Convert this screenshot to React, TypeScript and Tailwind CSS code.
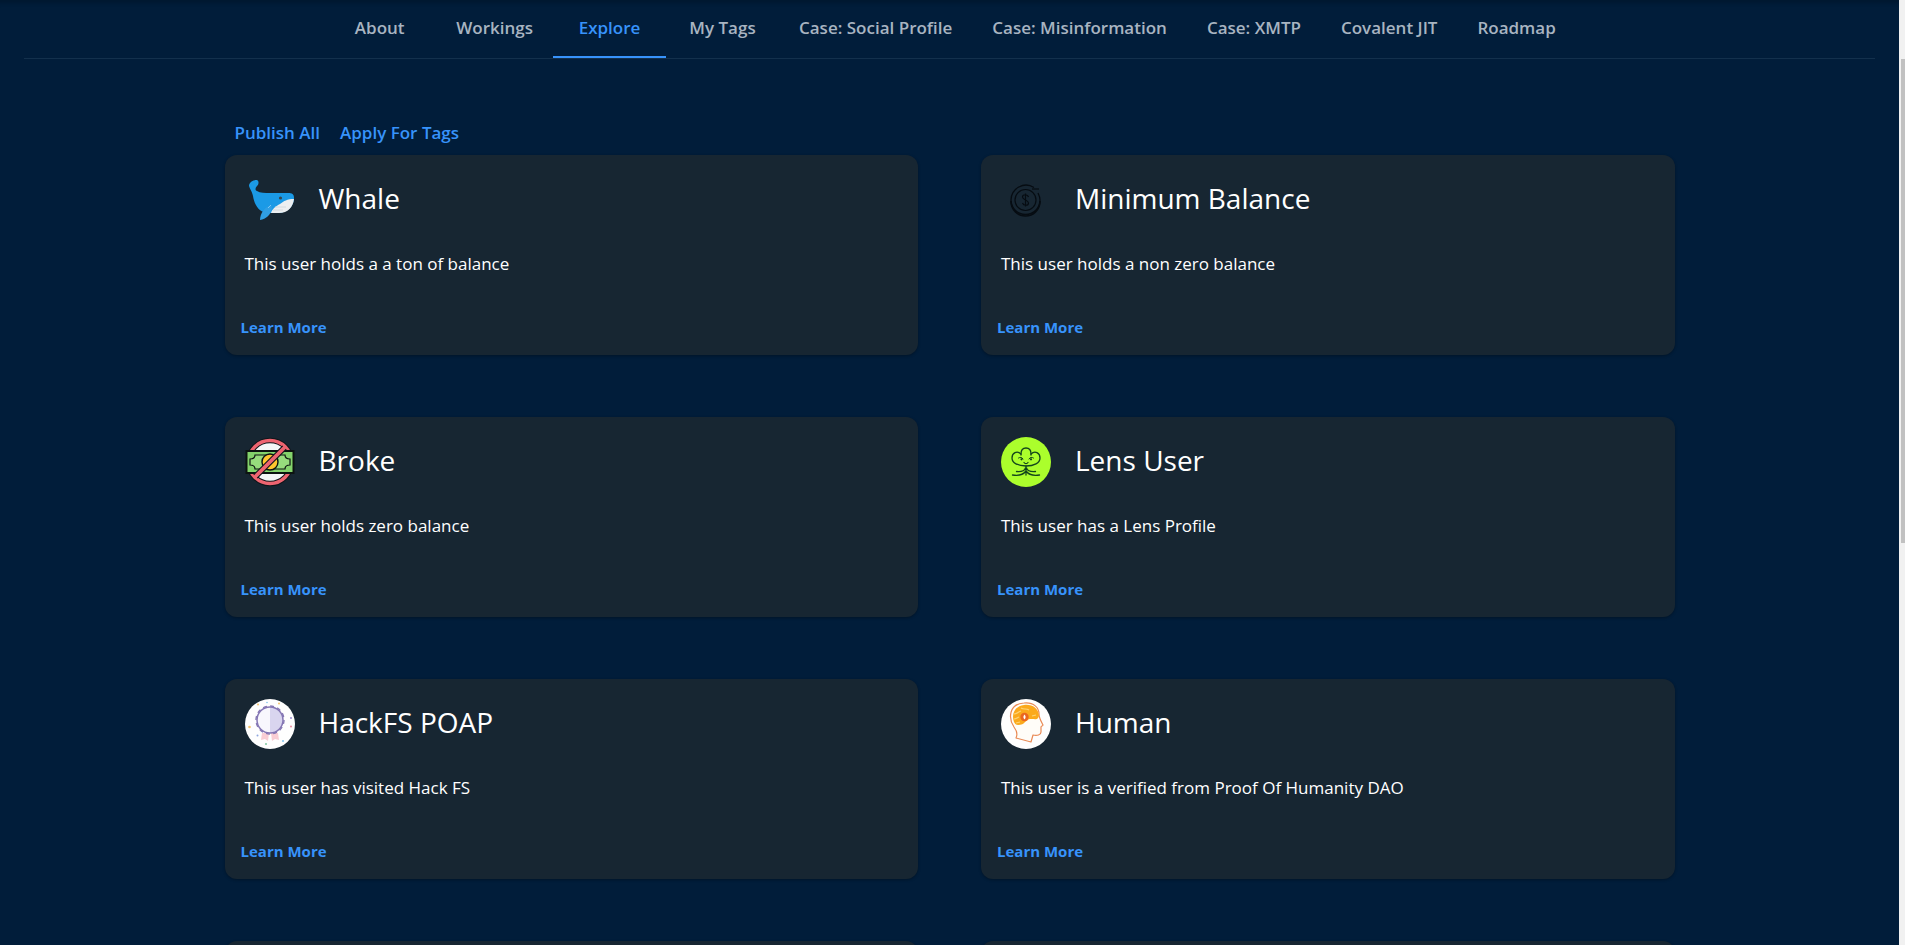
import type { ReactNode } from "react";

const tabs = [
  "About",
  "Workings",
  "Explore",
  "My Tags",
  "Case: Social Profile",
  "Case: Misinformation",
  "Case: XMTP",
  "Covalent JIT",
  "Roadmap",
];

function WhaleIcon() {
  return (
    <svg viewBox="0 0 50 50" className="size-[50px] shrink-0">
      <path
        d="M4 10c1-3 4-5 8-5 2 1 2 4 0 6-2 2-2 4 0 5 3 2 8 2 13 2h18c4 0 6 1 6 5 0 8-6 14-15 15H22C13 37 9 28 8 21 7 16 4 13 4 10z"
        fill="#1b9ae6"
      />
      <path d="M26 38c1-4 5-7 9-9 4-3 7-5 14-5-1 8-6 14-15 14z" fill="#eceff1" />
      <path d="M28 35h10M30 32h11" stroke="#cfd6da" strokeWidth="0.800" />
      <path d="M26 30c-6 2-11 8-11 15 6-1 11-5 12-12z" fill="#2f9fe4" />
      <path d="M26 30l-3 3" stroke="#7cc6f2" strokeWidth="1" />
      <circle cx="35.500" cy="23" r="1.600" fill="#37474f" />
    </svg>
  );
}

function CoinIcon() {
  return (
    <svg viewBox="0 0 50 50" className="size-[50px] shrink-0" fill="none" stroke="#060c12">
      <path d="M33 12.500A15 15 0 0 0 10 25a14.500 14.500 0 0 0 29 0c0-3-1-5-2-7" strokeWidth="1.300" />
      <path d="M10 26c0 9 7 15 14.500 15S39 35 39 26" strokeWidth="1.700" />
      <circle cx="24.500" cy="25" r="10.500" strokeWidth="1.200" />
      <path d="M31 14h7" strokeWidth="1.200" />
      <path d="M27.500 22c-1-3-6-3-6 0s6 3 6 6-5 3-6 0M24.500 18.500v13" strokeWidth="1.200" />
    </svg>
  );
}

function BrokeIcon() {
  return (
    <svg viewBox="0 0 50 50" className="size-[50px] shrink-0">
      <circle cx="25" cy="25" r="21.500" fill="#f4f6f6" stroke="#10151a" strokeWidth="5.500" />
      <circle cx="25" cy="25" r="21.500" fill="none" stroke="#ee6470" strokeWidth="3.400" />
      <rect x="1.500" y="14" width="47" height="22" fill="#83d36b" stroke="#0c1310" strokeWidth="2" />
      <path
        d="M10 18h30c0 3 2 4 5 4v6c-3 0-5 1-5 4H10c0-3-2-4-5-4v-6c3 0 5-1 5-4z"
        fill="#97dd7d"
        stroke="#0c1310"
        strokeWidth="1.200"
      />
      <circle cx="25" cy="25" r="8" fill="#ffc62e" stroke="#0c1310" strokeWidth="1.400" />
      <path d="M10.500 39.500l29-29" stroke="#10151a" strokeWidth="6" />
      <path d="M9.500 40.500l31-31" stroke="#ee6470" strokeWidth="3.800" />
    </svg>
  );
}

function LensIcon() {
  return (
    <svg viewBox="0 0 50 50" className="size-[50px] shrink-0" fill="none">
      <circle cx="25" cy="25" r="25" fill="#abfe2c" />
      <g stroke="#12451c" strokeWidth="1.300" strokeLinecap="round">
        <path d="M20 17c-4-4-9-1-9 4 0 5 6 8 14 8s14-3 14-8c0-5-5-8-9-4" />
        <path d="M20 18v-1c0-4 2-6 5-6s5 2 5 6v1" />
        <path d="M25 29v9M24.500 31c-1 3-4 4-9 3.500M25.500 31c1 3 4 4 9 3.500M25 34c-3 4-8 5-13.500 4M25 34c3 4 8 5 13.500 4" />
        <path d="M23 25.500c1 1.500 3 1.500 4 0" />
        <path d="M17.500 21c1.500-1 3.500-1 4.500 1M28 22c1-2 3-2 4.500-1" strokeWidth="1" />
      </g>
      <circle cx="20.500" cy="22.300" r="1.100" fill="#12451c" />
      <circle cx="30" cy="22.300" r="1.100" fill="#12451c" />
    </svg>
  );
}

function PoapIcon() {
  return (
    <svg viewBox="0 0 50 50" className="size-[50px] shrink-0">
      <circle cx="25" cy="25" r="25" fill="#fefefe" />
      <path d="M17 34h7l-1 8-3-2-4 1zM26 34h7l1 7-4-1-3 2z" fill="#f9cdd4" />
      <circle cx="25" cy="21" r="13" fill="#f8f7fd" />
      <path d="M25 8a13 13 0 0 1 0 26z" fill="#d9d5ef" />
      <circle cx="25" cy="21" r="13" fill="none" stroke="#8577b4" strokeWidth="1.500" />
      <circle cx="25" cy="21" r="14" fill="none" stroke="#8577b4" strokeWidth="1.400" strokeDasharray="4 3.300" />
      <circle cx="13" cy="5.500" r="1" fill="#f4c36a" />
      <circle cx="22" cy="3.500" r="0.800" fill="#7fc4ec" />
      <circle cx="34" cy="4.500" r="1" fill="#f4c36a" />
      <circle cx="4.500" cy="28" r="1.300" fill="#f4c36a" />
      <circle cx="12.500" cy="36.500" r="1" fill="#8ea6e0" />
      <circle cx="46" cy="19" r="1" fill="#9b8bd0" />
      <circle cx="46" cy="27.500" r="1" fill="#ee8aa0" />
      <circle cx="38" cy="42" r="1" fill="#7fc4ec" />
      <circle cx="21" cy="45" r="1" fill="#7fc9a0" />
    </svg>
  );
}

function HumanIcon() {
  return (
    <svg viewBox="0 0 50 50" className="size-[50px] shrink-0">
      <circle cx="25" cy="25" r="25" fill="#fefefe" />
      <path
        d="M15 39c2-4 1-7-2-11C7 19 8 5 23 4c10-1 15 5 15 11 0 4 2 7 4 11 0 1-2 1-2 2v5c0 3-4 4-8 3l-2 7z"
        fill="#fffdf8"
        stroke="#e98a55"
        strokeWidth="1.200"
        strokeLinejoin="round"
      />
      <path
        d="M13 23c-3-8 1-16 10-17 8-1 14 3 15 10 0 3-2 5-5 4h-4c-2 0-3 2-5 3-1 2-4 3-7 3-2 0-3-1-4-3z"
        fill="#fba91c"
      />
      <path
        d="M13 15c3 0 4-2 7-3M13 20c2 0 3-1 5-2M20 9c3 2 5 0 8 2M31 17l4-1M15 24l4-1"
        fill="none"
        stroke="#fdd476"
        strokeWidth="1.200"
      />
      <circle cx="23.500" cy="18" r="4.200" fill="#ea6520" />
      <path d="M23.500 15.500c-1.500 2-1.500 3 0 5 1.500-2 1.500-3 0-5z" fill="#fff" />
    </svg>
  );
}

interface Tag {
  title: string;
  description: string;
  icon: ReactNode;
}

const tags: Tag[] = [
  { title: "Whale", description: "This user holds a a ton of balance", icon: <WhaleIcon /> },
  { title: "Minimum Balance", description: "This user holds a non zero balance", icon: <CoinIcon /> },
  { title: "Broke", description: "This user holds zero balance", icon: <BrokeIcon /> },
  { title: "Lens User", description: "This user has a Lens Profile", icon: <LensIcon /> },
  { title: "HackFS POAP", description: "This user has visited Hack FS", icon: <PoapIcon /> },
  { title: "Human", description: "This user is a verified from Proof Of Humanity DAO", icon: <HumanIcon /> },
];

const cardClass = "rounded-xl bg-[#172632] shadow-[0_1px_3px_rgba(0,0,0,0.3)]";

function TagCard({ title, description, icon }: Tag) {
  return (
    <div className={cardClass}>
      <div className="flex items-center gap-6 px-5 pt-5">
        {icon}
        <h2 className="pb-1 text-[28px] leading-10">{title}</h2>
      </div>
      <p className="mt-6 px-5 text-[17px] leading-[30px]">{description}</p>
      <div className="px-4 pt-9 pb-4">
        <button className="block text-[15px] leading-6 font-bold text-[#3793fb]">Learn More</button>
      </div>
    </div>
  );
}

export default function App() {
  return (
    <div className="flex h-screen overflow-hidden bg-[#011d3a] font-['Open_Sans',sans-serif] text-white">
      <div className="min-w-0 flex-1 shadow-[inset_0_7px_4px_-4px_rgba(0,0,0,0.2)]">
        <nav className="mx-6 flex justify-center border-b border-[#13304c]">
          {tabs.map((tab) => (
            <button
              key={tab}
              className={`h-[58px] min-w-[113px] border-b-2 px-5 text-[17px] font-semibold whitespace-nowrap ${
                tab === "Explore" ? "border-[#3793fb] text-[#3793fb]" : "border-transparent text-[#a8b4c1]"
              }`}
            >
              {tab}
            </button>
          ))}
        </nav>
        <main className="mx-auto w-full max-w-[1450px] pt-[60px]">
          <div className="flex gap-5 px-[10px] pb-2 text-[17px] leading-7 font-semibold text-[#3793fb]">
            <button>Publish All</button>
            <button>Apply For Tags</button>
          </div>
          <div className="grid grid-cols-2 gap-x-[63px] gap-y-[62px]">
            {tags.map((tag) => (
              <TagCard key={tag.title} {...tag} />
            ))}
            <div className={`${cardClass} h-[200px]`} />
            <div className={`${cardClass} h-[200px]`} />
          </div>
        </main>
      </div>
      {/* scrollbar */}
      <div className="w-[6px] shrink-0 bg-[#f1f1f1] pt-[59px] pl-[2px]">
        <div className="h-[484px] bg-[#c1c1c1]" />
      </div>
    </div>
  );
}
